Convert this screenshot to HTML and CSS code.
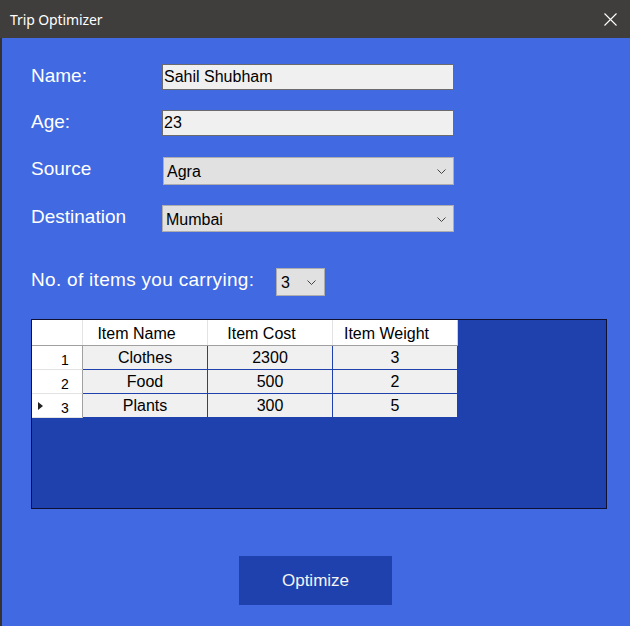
FILE: index.html
```html
<!DOCTYPE html>
<html>
<head>
<meta charset="utf-8">
<title>Trip Optimizer</title>
<link rel="stylesheet" href="styles.css">
</head>
<body>
<div class="window">
  <header class="titlebar">
    <span class="title">Trip Optimizer</span>
    <svg class="close" width="13" height="13" viewBox="0 0 13 13"><path d="M0.5 0.5 L12.5 12.5 M12.5 0.5 L0.5 12.5" stroke="#ffffff" stroke-width="1.1" fill="none"/></svg>
  </header>
  <main class="content">
    <div class="form">
      <div class="field">
        <span class="lbl">Name:</span>
        <div class="textbox">Sahil Shubham</div>
      </div>
      <div class="field gap20">
        <span class="lbl">Age:</span>
        <div class="textbox">23</div>
      </div>
      <div class="field gap21">
        <span class="lbl">Source</span>
        <div class="combo shift">Agra<svg class="chev" width="9" height="5" viewBox="0 0 9 5"><path d="M0.5 0.5 L4.5 4.5 L8.5 0.5" stroke="#444" stroke-width="1" fill="none"/></svg></div>
      </div>
      <div class="field gap20">
        <span class="lbl">Destination</span>
        <div class="combo tall27">Mumbai<svg class="chev" width="9" height="5" viewBox="0 0 9 5"><path d="M0.5 0.5 L4.5 4.5 L8.5 0.5" stroke="#444" stroke-width="1" fill="none"/></svg></div>
      </div>
    </div>

    <div class="items-row">
      <span class="lbl wide">No. of items you carrying:</span>
      <div class="combo small">3<svg class="chev" width="9" height="5" viewBox="0 0 9 5"><path d="M0.5 0.5 L4.5 4.5 L8.5 0.5" stroke="#444" stroke-width="1" fill="none"/></svg></div>
    </div>

    <div class="grid">
      <div class="row head">
        <div class="rh corner"></div>
        <div class="hc">Item Name</div>
        <div class="hc">Item Cost</div>
        <div class="hc last">Item Weight</div>
      </div>
      <div class="row">
        <div class="rh"><span class="num">1</span></div>
        <div class="dc">Clothes</div>
        <div class="dc">2300</div>
        <div class="dc">3</div>
      </div>
      <div class="row">
        <div class="rh"><span class="num">2</span></div>
        <div class="dc">Food</div>
        <div class="dc">500</div>
        <div class="dc">2</div>
      </div>
      <div class="row lastrow">
        <div class="rh"><span class="marker"></span><span class="num">3</span></div>
        <div class="dc">Plants</div>
        <div class="dc">300</div>
        <div class="dc">5</div>
      </div>
    </div>

    <div class="actions">
      <button class="btn">Optimize</button>
    </div>
  </main>
</div>
</body>
</html>
```

FILE: styles.css
```css
html, body {
  margin: 0;
  padding: 0;
  background: #4169e1;
}

body {
  font-family: "Liberation Sans", Arial, sans-serif;
  width: 630px;
  height: 626px;
  overflow: hidden;
}

.window {
  width: 630px;
  height: 626px;
  display: flex;
  flex-direction: column;
  box-sizing: border-box;
  border-left: 2px solid #333231;
}

.titlebar {
  height: 38px;
  flex: none;
  background: #3f3e3c;
  display: flex;
  align-items: center;
  justify-content: space-between;
  padding: 0 13px 0 10px;
  margin-left: -2px;
}

.title {
  font-family: "Noto Sans", "Open Sans", sans-serif;
  font-size: 14px;
  color: #ffffff;
  letter-spacing: -0.1px;
  margin-top: 1px;
}

.close {
  display: block;
}

.content {
  flex: 1;
  background: #4169e1;
  padding: 26px 0 0 29px;
  display: flex;
  flex-direction: column;
}

.form {
  display: flex;
  flex-direction: column;
}

.field {
  display: grid;
  grid-template-columns: 131px 292px;
  align-items: start;
}

.gap20 { margin-top: 20px; }
.gap21 { margin-top: 21px; }

.lbl {
  color: #ffffff;
  font-size: 19px;
  line-height: 22px;
  margin-top: 1px;
  white-space: nowrap;
}

.lbl.wide {
  letter-spacing: 0.3px;
  width: 245px;
  flex: none;
}

.textbox {
  box-sizing: border-box;
  height: 26px;
  border: 1px solid #6b6b6b;
  background: #f0f0f0;
  font-size: 16px;
  line-height: 24px;
  padding-left: 1px;
  color: #000;
}

.combo {
  box-sizing: border-box;
  height: 28px;
  border: 1px solid #adadad;
  background: #e1e1e1;
  font-size: 16px;
  line-height: 24px;
  padding: 2px 0 0 3px;
  color: #000;
  position: relative;
}

.combo.shift { margin-left: 1px; }
.combo.tall27 { height: 27px; }

.chev {
  position: absolute;
  right: 7px;
  top: 11px;
}

.items-row {
  margin-top: 36px;
  display: flex;
  align-items: flex-start;
}

.combo.small {
  width: 49px;
  flex: none;
  padding-left: 4px;
}

.combo.small .chev { right: 8px; }

.grid {
  margin-top: 23px;
  width: 576px;
  height: 190px;
  box-sizing: border-box;
  border: 1px solid #101030;
  background: #1e41ad;
  display: flex;
  flex-direction: column;
  align-items: flex-start;
}

.row {
  display: flex;
  font-size: 16px;
  color: #000;
}

.head {
  height: 25px;
  background: #ffffff;
  border-bottom: 1px solid #a0a0a0;
}

.rh {
  width: 50px;
  flex: none;
  background: #ffffff;
  border-right: 1px solid #a0a0a0;
  border-bottom: 1px solid #e3e3e3;
  position: relative;
  font-size: 14px;
  line-height: 20px;
  padding-top: 4px;
  height: 19px;
}

.rh.corner {
  border-right: 1px solid #e3e3e3;
  border-bottom: none;
  height: 25px;
  padding-top: 0;
}

.num {
  display: block;
  padding-left: 29px;
}

.marker {
  position: absolute;
  left: 6px;
  top: 8px;
  width: 0;
  height: 0;
  border-top: 4px solid transparent;
  border-bottom: 4px solid transparent;
  border-left: 5px solid #222;
}

.hc {
  flex: none;
  width: 125px;
  padding-right: 17px;
  text-align: center;
  border-right: 1px solid #e3e3e3;
  height: 25px;
  line-height: 23px;
  padding-top: 2px;
  box-sizing: border-box;
}

.hc.last {
  border-right: 1px solid #d0d0d0;
}

.dc {
  width: 124px;
  flex: none;
  text-align: center;
  background: #f0f0f0;
  border-right: 1px solid #1e41ad;
  border-bottom: 1px solid #1e41ad;
  height: 23px;
  line-height: 23px;
}

.actions {
  margin-top: 47px;
  padding-left: 208px;
}

.btn {
  width: 153px;
  height: 49px;
  border: none;
  background: #1e41ad;
  color: #f4f4f4;
  font-family: "Liberation Sans", Arial, sans-serif;
  font-size: 17px;
  padding: 0;
  margin: 0;
  display: block;
}
```
